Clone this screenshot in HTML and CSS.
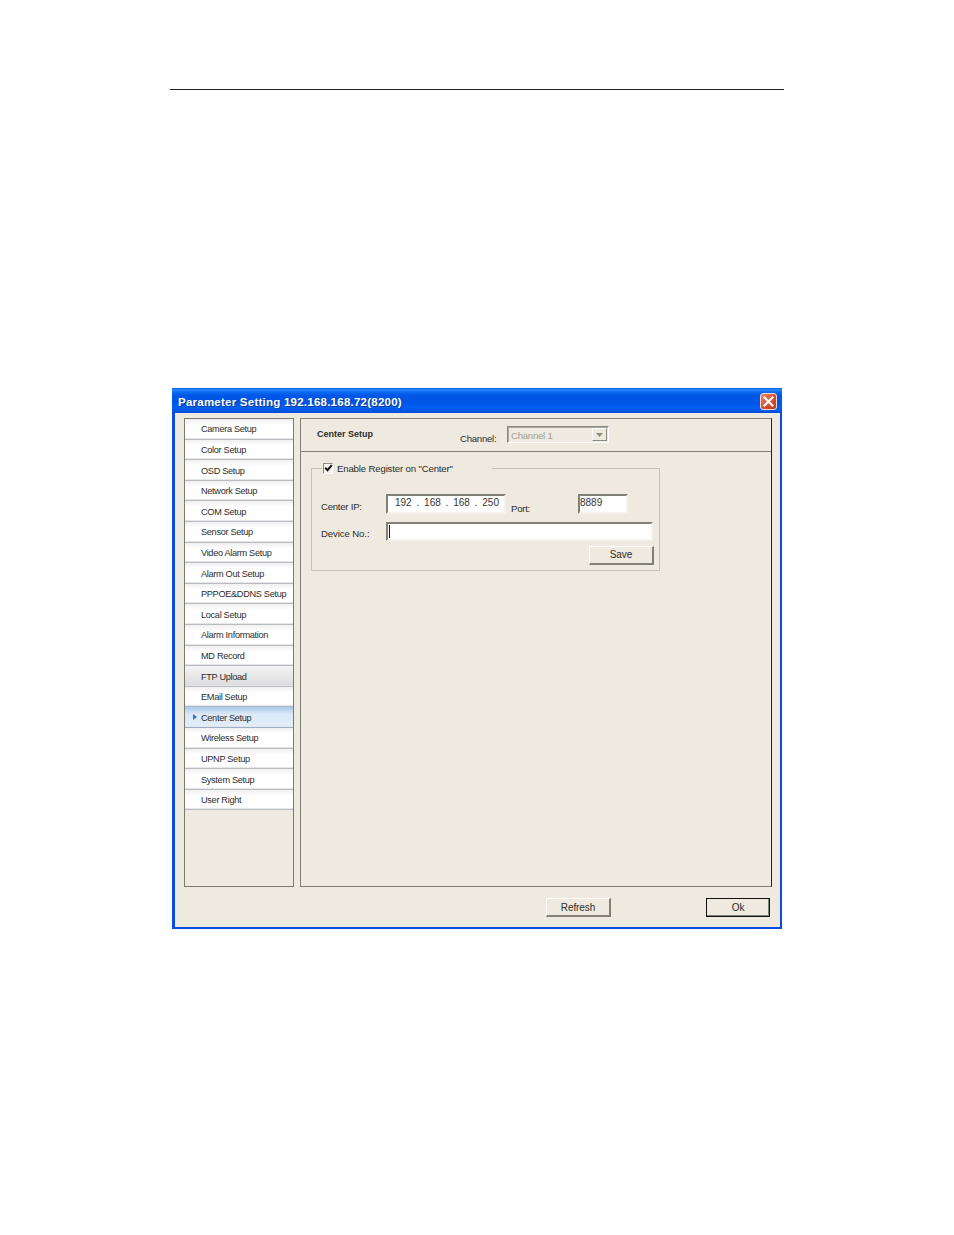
FILE: index.html
```html
<!DOCTYPE html>
<html lang="en">
<head>
<meta charset="utf-8">
<title>Parameter Setting</title>
<link rel="stylesheet" href="styles.css">
</head>
<body>
<div class="page">
  <div class="rule"></div>
  <div class="window">
    <div class="titlebar">
      <span class="title">Parameter Setting 192.168.168.72(8200)</span>
      <span class="close">
        <svg viewBox="0 0 17 17" width="17" height="17"><path d="M4.5 4.5l8 8M12.5 4.5l-8 8" stroke="#fff" stroke-width="2.2" stroke-linecap="square" fill="none"/></svg>
      </span>
    </div>
    <div class="client">
      <div class="panes">
        <nav class="menu">
          <div class="menu-list">
            <div class="item">Camera Setup</div>
            <div class="item">Color Setup</div>
            <div class="item">OSD Setup</div>
            <div class="item">Network Setup</div>
            <div class="item">COM Setup</div>
            <div class="item">Sensor Setup</div>
            <div class="item">Video Alarm Setup</div>
            <div class="item">Alarm Out Setup</div>
            <div class="item">PPPOE&amp;DDNS Setup</div>
            <div class="item">Local Setup</div>
            <div class="item">Alarm Information</div>
            <div class="item">MD Record</div>
            <div class="item hover">FTP Upload</div>
            <div class="item">EMail Setup</div>
            <div class="item active">Center Setup</div>
            <div class="item">Wireless Setup</div>
            <div class="item">UPNP Setup</div>
            <div class="item">System Setup</div>
            <div class="item">User Right</div>
          </div>
        </nav>
        <section class="content">
          <header class="content-head">
            <span class="heading">Center Setup</span>
            <span class="channel-label">Channel:</span>
            <span class="combo">
              <span class="combo-text">Channel 1</span>
              <span class="combo-btn"><svg viewBox="0 0 7 4" width="7" height="4"><path d="M0 0h7L3.500 4z" fill="#8a8a80"/></svg></span>
            </span>
          </header>
          <fieldset class="group">
            <legend class="group-legend">
              <span class="check"><svg viewBox="0 0 9 9" width="9" height="9"><path d="M1.200 3.800l2.300 2.400 4.300-5" stroke="#111" stroke-width="2" fill="none"/></svg></span>
              <span>Enable Register on "Center"</span>
            </legend>
            <div class="row row-ip">
              <span class="label label-ip">Center IP:</span>
              <span class="field ip"><span>192</span><i>.</i><span>168</span><i>.</i><span>168</span><i>.</i><span>250</span></span>
              <span class="label label-port">Port:</span>
              <span class="field port">8889</span>
            </div>
            <div class="row row-device">
              <span class="label label-device">Device No.:</span>
              <span class="field device"><b class="caret"></b></span>
            </div>
            <div class="row row-save">
              <span class="btn save">Save</span>
            </div>
          </fieldset>
        </section>
      </div>
      <footer class="actions">
        <span class="btn refresh">Refresh</span>
        <span class="btn ok">Ok</span>
      </footer>
    </div>
  </div>
</div>
</body>
</html>
```
FILE: styles.css
```css
* { box-sizing: border-box; }
html, body { margin: 0; background: #fff; }
body { font-family: "Liberation Sans", Arial, sans-serif; font-size: 9.200px; letter-spacing: -.32px; color: #2c2c2c; }
.page { padding-top: 89px; height: 1235px; overflow: hidden; }
.rule { margin-left: 170px; width: 614px; height: 1px; background: #222; }
.window {
  margin: 298px 0 0 172px; width: 610px; height: 541px;
  display: flex; flex-direction: column;
  border-radius: 2px 2px 0 0;
  background: #0a4ce0;
}
.titlebar {
  height: 25px; flex: none;
  display: flex; align-items: center; justify-content: space-between;
  padding: 3px 5px 0 6px;
  background: linear-gradient(#0a5ae6 0, #2a8af8 8%, #0a6cf4 16%, #0056e6 30%, #0054e6 60%, #0060f4 76%, #0058e8 90%, #0a4cd0 100%);
}
.title {
  color: #fff; font-family: "Liberation Sans", sans-serif; font-weight: 700; font-size: 11.500px; letter-spacing: .24px;
  text-shadow: 1px 1px 0 #0a3a9a; white-space: nowrap;
}
.close {
  width: 17px; height: 17px; border-radius: 3px; border: 1px solid #f0d8d0; margin-top: -2px;
  background: linear-gradient(135deg, #e88a68, #d4502c 55%, #c03c18);
  display: flex; align-items: center; justify-content: center;
}
.close svg { flex: none; }
.client {
  flex: 1; margin: 0 2px 2px 3px; background: #eeeadf;
  display: flex; flex-direction: column; padding: 5px 8px 0 9px;
}
.panes { display: flex; gap: 6px; height: 469px; }
.menu { width: 110px; flex: none; border: solid #7a7a70; border-width: 1px 1px 1px 1px; background: #eeeadf; }
.menu-list { display: grid; grid-template-columns: minmax(0, 1fr); grid-template-rows: repeat(19, 1fr); height: 391.500px; }
.item {
  display: flex; align-items: center; padding: 1px 0 0 16px; white-space: nowrap;
  background: linear-gradient(#f0f0f0, #fff 30%);
  border-bottom: 1px solid #b8bcc0;
  box-shadow: inset 0 -1px 0 #e4e6e8;
}
.item.hover { background: linear-gradient(#f4f4f4, #dcdcde); }
.item.active { position: relative; background: linear-gradient(#a8c8ec, #dbe8f6 35%, #e2eefa); border-bottom-color: #9ab0c8; }
.item.active::before {
  content: ""; position: absolute; left: 8px; top: 7px;
  border-left: 4px solid #3a70b8; border-top: 3px solid transparent; border-bottom: 3px solid transparent;
}
.content {
  width: 472px; flex: none; border: 1px solid #808075; border-right-color: #222; border-right-width: 1px;
  display: flex; flex-direction: column;
}
.content-head {
  height: 33px; flex: none; border-bottom: 1px solid #808075;
  display: flex; align-items: flex-start; padding: 7px 0 0 16px;
}
.heading { font-weight: 700; font-size: 9px; letter-spacing: 0; width: 143px; padding-top: 3px; }
.channel-label { width: 47px; padding-top: 7px; font-size: 9.600px; letter-spacing: -.25px; }
.combo {
  width: 102px; height: 17px; border: 1px solid; border-color: #8a8a80 #fff #fff #8a8a80;
  box-shadow: inset 1px 1px 0 #a8a89c;
  display: flex; align-items: center; justify-content: space-between; padding: 0 1px 0 3px;
  color: #a0a098; font-size: 9.600px; letter-spacing: -.25px;
}
.combo-text { padding-top: 1px; }
.combo-btn {
  width: 15px; height: 13px; background: #eeeadf;
  border: 1px solid; border-color: #fff #8a8a80 #8a8a80 #fff;
  display: flex; align-items: center; justify-content: center;
}
.group {
  margin: 10px 0 0 10px; padding: 0; width: 349px; height: 109px;
  border: 1px solid #c4c2b6;
  display: block; min-width: 0;
}
.group-legend {
  width: 170px; margin-left: 10px; padding: 1px 0 0 1px; height: 12px;
  display: flex; align-items: center; gap: 4px; font-size: 9.600px; letter-spacing: -.15px; line-height: 12px;
}
.check {
  width: 10px; height: 11px; border: 1px solid; border-color: #8a8a80 #fff #fff #8a8a80; background: #f4f2ea;
  display: flex; align-items: center; justify-content: center; flex: none;
}
.check svg { flex: none; }
.row { display: flex; }
.label { font-size: 9.600px; letter-spacing: -.25px; }
.row-ip { margin: 19.500px 0 0 9px; height: 20px; }
.label-ip { width: 65px; padding-top: 7px; }
.label-port { width: 67px; margin-left: 5px; padding-top: 9px; }
.field {
  display: flex; height: 20px; background: #fff; border: 2px solid; border-color: #808075 #f4f2ea #f4f2ea #808075;
  font-size: 10px; letter-spacing: 0; color: #333;
}
.ip { width: 120px; align-items: flex-start; justify-content: space-between; padding: 1px 5px 0 7px; line-height: 12px; }
.ip i { font-style: normal; }
.port { width: 50px; padding: 1px 0 0; line-height: 12px; }
.row-device { margin: 8px 0 0 9px; height: 19px; }
.label-device { width: 65px; padding-top: 6px; letter-spacing: -.1px; }
.device { width: 267px; height: 19px; border-color: #808075 #f4f2ea #f4f2ea #808075; padding: 1px 0 0 1px; }
.caret { width: 1px; height: 13px; background: #111; }
.row-save { justify-content: flex-end; margin: 5px 5px 0 0; }
.btn {
  display: flex; align-items: center; justify-content: center;
  height: 19px; background: #eeeadf; font-size: 10px; letter-spacing: -.1px;
  border: 1px solid; border-color: #fff #808075 #808075 #fff;
  border-right-width: 2px; border-bottom-width: 2px;
}
.save { width: 65px; padding-bottom: 1px; }
.actions { display: flex; justify-content: flex-end; align-items: flex-start; padding-top: 11px; padding-right: 2px; }
.refresh { width: 65px; margin-right: 95px; }
.ok { width: 64px; padding-bottom: 1px; border-color: #111; border-width: 1px; border-right-width: 1px; box-shadow: inset -1px -1px 0 #808075; }
```
